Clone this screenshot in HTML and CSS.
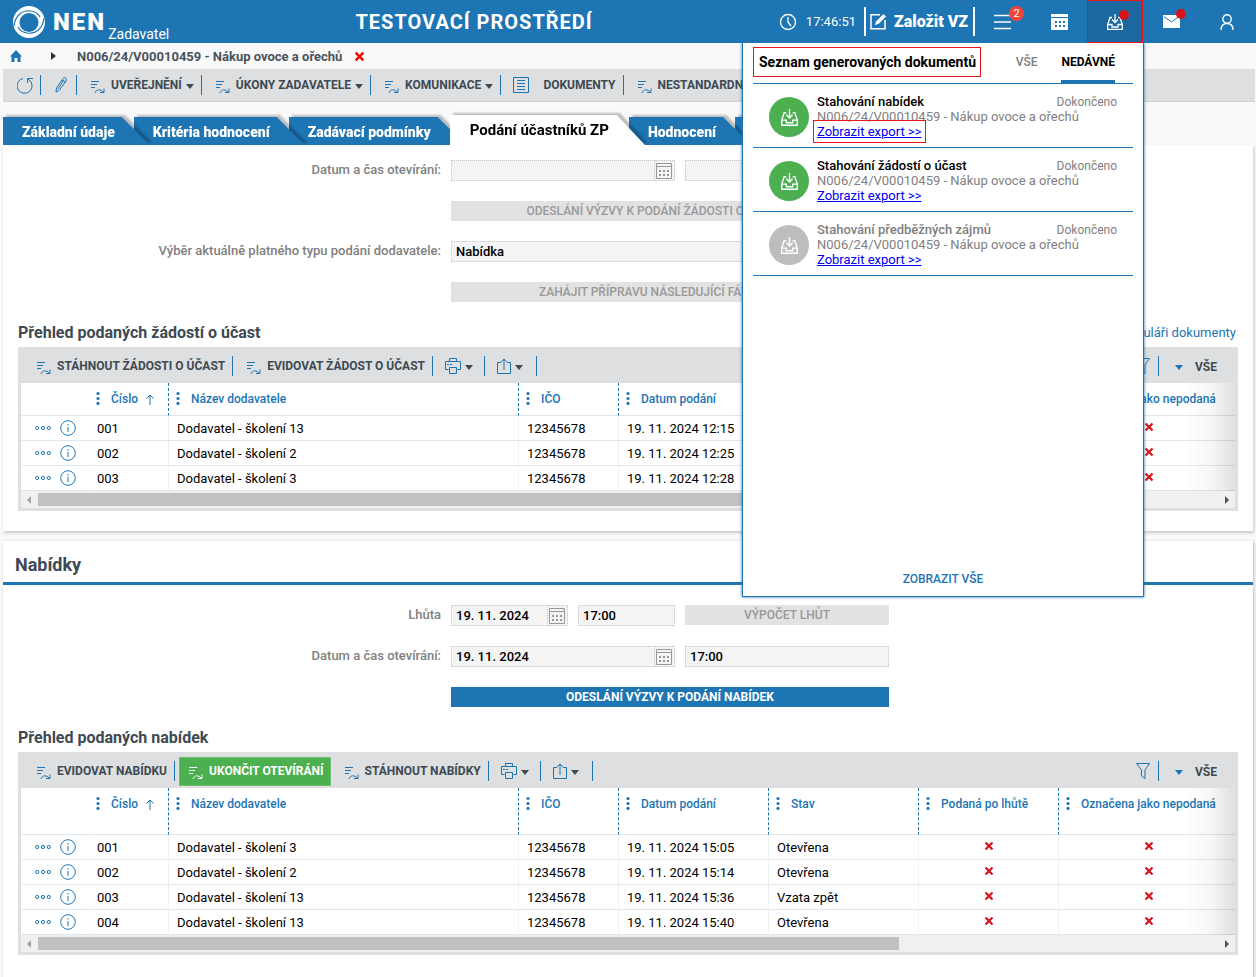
FILE: index.html
```html
<!DOCTYPE html>
<html lang="cs">
<head>
  <meta charset="UTF-8">
  <title>NEN Zadavatel</title>
  <link rel="stylesheet" href="styles.css">
</head>
<body>
  <!-- icon set -->
  <svg class="sprite" aria-hidden="true">
    <symbol id="i-logo" viewBox="0 0 32 32"><path fill="#fff" fill-rule="evenodd" d="M16 0a16 16 0 1 1 0 32a16 16 0 1 1 0-32zM16 7a9.500 9.500 0 1 0 0 19a9.500 9.500 0 1 0 0-19z"/><path fill="none" stroke="#1d75b4" stroke-width="1.200" d="M1 20C2 10 9 3.500 18 5c4 .5 7 2.500 9 6M31 12c-1 10-8 16.500-17 15-4-.5-7-2.500-9-6"/></symbol>
    <symbol id="i-action" viewBox="0 0 14 14"><path fill="none" stroke="currentColor" d="M0 1.500h8M0 4.500h6M0 7.500h4M4 13c1-4 6-4 8-1M13 8.500v4H9"/></symbol>
    <symbol id="i-caret" viewBox="0 0 8 5"><path fill="currentColor" d="M0 0h8L4 5z"/></symbol>
    <symbol id="i-print" viewBox="0 0 16 16"><path fill="none" stroke="currentColor" d="M4.500 3.500v-3h7v3M3.500 11.500h-3v-8h15v8h-3M4.500 9.500h7v6h-7zM2 6.500h2M5 6.500h2"/></symbol>
    <symbol id="i-share" viewBox="0 0 14 16"><path fill="none" stroke="currentColor" d="M4 4.500H.500v11h13v-11H10M7 12V1M4 4l3-3 3 3"/></symbol>
    <symbol id="i-filter" viewBox="0 0 14 16"><path fill="none" stroke="currentColor" d="M.500.500h13L9 7v8.500L5.500 13V7z"/></symbol>
    <symbol id="i-calendar" viewBox="0 0 16 16"><path fill="none" stroke="currentColor" d="M.500.500h15v15H.500zM0 3.500h16"/><path fill="currentColor" d="M3 7h2v2H3zM7 7h2v2H7zM11 7h2v2h-2zM3 11h2v2H3zM7 11h2v2H7zM11 11h2v2h-2z"/></symbol>
    <symbol id="i-tray" viewBox="0 0 16 16"><path fill="none" stroke="currentColor" stroke-width="1.300" d="M5 3.500H3l-2.300 7v4.800h14.600v-4.800L13 3.500h-2M.700 10.500H5V13h6v-2.500h4.300M8 0v8.500M5 5.500l3 3 3-3"/></symbol>
    <symbol id="i-x" viewBox="0 0 10 10"><path fill="none" stroke="currentColor" stroke-width="2.200" d="M1.500 1.500l7 7M8.500 1.500l-7 7"/></symbol>
    <symbol id="i-info" viewBox="0 0 16 16"><circle cx="8" cy="8" r="7.300" fill="none" stroke="currentColor"/><path stroke="currentColor" d="M8 7v5M8 4v1.500"/></symbol>
    <symbol id="i-more" viewBox="0 0 16 6"><g fill="none" stroke="currentColor"><circle cx="2.200" cy="3" r="1.600"/><circle cx="8" cy="3" r="1.600"/><circle cx="13.800" cy="3" r="1.600"/></g></symbol>
    <symbol id="i-up" viewBox="0 0 8 11"><path fill="none" stroke="currentColor" d="M4 11V1M.500 4.500L4 1l3.500 3.500"/></symbol>
    <symbol id="i-dots" viewBox="0 0 4 14"><g fill="currentColor"><circle cx="2" cy="2.500" r="1.600"/><circle cx="2" cy="7.500" r="1.600"/><circle cx="2" cy="12.400" r="1.600"/></g></symbol>
    <symbol id="i-refresh" viewBox="0 0 16 17"><path fill="none" stroke="currentColor" d="M6 1.500A7.500 7.500 0 1 0 14.500 6M10.500 6V1.500H16M10.500 1.500L15 6"/></symbol>
    <symbol id="i-pencil" viewBox="0 0 12 16"><path fill="none" stroke="currentColor" d="M1 15l.5-4L8 1.500C9.500-.500 12.500 1.500 11 4L4.500 13zM7 3l3.500 2.500M8.500 3.500L3 12"/></symbol>
    <symbol id="i-doc" viewBox="0 0 16 16"><path fill="none" stroke="currentColor" d="M.500.500h15v15H.500zM4 3.500h8M4 6.500h8M4 9.500h8M4 12.500h8"/></symbol>
  </svg>

  <header class="header">
    <a class="logo" href="#">
      <svg class="logo-mark"><use href="#i-logo"/></svg>
      <span class="logo-name">NEN</span>
      <span class="logo-role">Zadavatel</span>
    </a>
    <h1 class="env">TESTOVACÍ PROSTŘEDÍ</h1>
    <div class="clock">
      <svg width="18" height="18" viewBox="0 0 18 18"><circle cx="9" cy="9" r="7.500" fill="none" stroke="#fff" stroke-width="1.300"/><path fill="none" stroke="#fff" stroke-width="1.300" d="M9 4v5l3 4"/></svg>
      <span>17:46:51</span>
    </div>
    <button class="create">
      <svg width="17" height="17" viewBox="0 0 17 17"><path fill="none" stroke="#fff" stroke-width="1.500" d="M10 1.700H1v14h14V7"/><path fill="#fff" d="M5 12l1-3.500L13.500 1 16 3.500 8.500 11z"/></svg>
      Založit VZ
    </button>
    <nav class="header-nav">
      <button class="nav-btn" aria-label="Úkoly">
        <svg width="18" height="16" viewBox="0 0 18 16"><path stroke="#fff" stroke-width="1.500" d="M0 1.500h17M0 8h17M0 14.500h17"/></svg>
        <span class="badge">2</span>
      </button>
      <button class="nav-btn" aria-label="Kalendář">
        <svg width="17" height="16" viewBox="0 0 17 16"><path fill="#fff" fill-rule="evenodd" d="M0 0h17v3H0zM0 4h17v12H0zM4 7v2h2V7zM8 7v2h2V7zM12 7v2h2V7zM4 11v2h2v-2zM8 11v2h2v-2zM12 11v2h2v-2z"/></svg>
      </button>
      <button class="nav-btn active" aria-label="Generované dokumenty">
        <svg width="16" height="16"><use href="#i-tray"/></svg>
        <span class="dot"></span>
      </button>
      <button class="nav-btn" aria-label="Zprávy">
        <svg width="17" height="13" viewBox="0 0 17 13"><path fill="#fff" d="M0 0h17v13H0z"/><path fill="none" stroke="#1d75b4" d="M1 1.500l7.500 5.500L16 1.500"/></svg>
        <span class="dot"></span>
      </button>
      <button class="nav-btn" aria-label="Uživatel">
        <svg width="14" height="16" viewBox="0 0 14 16"><g fill="none" stroke="#fff" stroke-width="1.400"><circle cx="7" cy="5" r="4.200"/><path d="M1 16c0-4 2-6.500 6-6.500s6 2.500 6 6.500"/></g></svg>
      </button>
    </nav>

    <div class="popup">
      <div class="popup-head">
        <h2 class="marked">Seznam generovaných dokumentů</h2>
        <button class="popup-tab">VŠE</button>
        <button class="popup-tab active">NEDÁVNÉ</button>
      </div>
      <ul class="exports">
        <li class="export">
          <span class="export-icon"><svg width="17" height="17"><use href="#i-tray"/></svg></span>
          <div class="export-text">
            <strong>Stahování nabídek</strong>
            <span>N006/24/V00010459 - Nákup ovoce a ořechů</span>
            <a class="outlined" href="#">Zobrazit export &gt;&gt;</a>
          </div>
          <span class="export-state">Dokončeno</span>
        </li>
        <li class="export">
          <span class="export-icon"><svg width="17" height="17"><use href="#i-tray"/></svg></span>
          <div class="export-text">
            <strong>Stahování žádostí o účast</strong>
            <span>N006/24/V00010459 - Nákup ovoce a ořechů</span>
            <a href="#">Zobrazit export &gt;&gt;</a>
          </div>
          <span class="export-state">Dokončeno</span>
        </li>
        <li class="export old">
          <span class="export-icon"><svg width="17" height="17"><use href="#i-tray"/></svg></span>
          <div class="export-text">
            <strong>Stahování předběžných zájmů</strong>
            <span>N006/24/V00010459 - Nákup ovoce a ořechů</span>
            <a href="#">Zobrazit export &gt;&gt;</a>
          </div>
          <span class="export-state">Dokončeno</span>
        </li>
      </ul>
      <a class="show-all" href="#">ZOBRAZIT VŠE</a>
    </div>
  </header>

  <nav class="breadcrumb">
    <a href="#" aria-label="Domů"><svg width="12" height="12" viewBox="0 0 12 12"><path fill="#1d75b4" d="M6 0l6 6.500h-1.500V12H7.500V8h-3v4h-3V6.500H0z"/></svg></a>
    <svg width="5" height="8" viewBox="0 0 5 8"><path fill="#333" d="M0 0l5 4-5 4z"/></svg>
    <span class="crumb">N006/24/V00010459 - Nákup ovoce a ořechů</span>
    <button class="close" aria-label="Zavřít"><svg width="11" height="11"><use href="#i-x"/></svg></button>
  </nav>

  <div class="toolbar main-toolbar">
    <button class="tool" aria-label="Obnovit"><svg width="16" height="17"><use href="#i-refresh"/></svg></button>
    <button class="tool" aria-label="Upravit"><svg width="12" height="16"><use href="#i-pencil"/></svg></button>
    <button class="tool"><svg class="act"><use href="#i-action"/></svg>UVEŘEJNĚNÍ<svg class="caret"><use href="#i-caret"/></svg></button>
    <button class="tool"><svg class="act"><use href="#i-action"/></svg>ÚKONY ZADAVATELE<svg class="caret"><use href="#i-caret"/></svg></button>
    <button class="tool"><svg class="act"><use href="#i-action"/></svg>KOMUNIKACE<svg class="caret"><use href="#i-caret"/></svg></button>
    <button class="tool wide"><svg width="16" height="16"><use href="#i-doc"/></svg>DOKUMENTY</button>
    <button class="tool"><svg class="act"><use href="#i-action"/></svg>NESTANDARDNÍ UKONČENÍ<svg class="caret"><use href="#i-caret"/></svg></button>
  </div>

  <ul class="tabs">
    <li><a href="#">Základní údaje</a></li>
    <li><a href="#">Kritéria hodnocení</a></li>
    <li><a href="#">Zadávací podmínky</a></li>
    <li class="active"><a href="#">Podání účastníků ZP</a></li>
    <li><a href="#">Hodnocení</a></li>
    <li><a href="#">Výsledek</a></li>
  </ul>

  <section class="card first">
    <div class="form">
      <label for="open1">Datum a čas otevírání:</label>
      <div class="fields">
        <div class="date span2"><input id="open1" type="text"><button aria-label="Vybrat datum"><svg width="16" height="16"><use href="#i-calendar"/></svg></button></div>
        <input type="text" aria-label="Čas otevírání">
      </div>
      <button class="btn" disabled>ODESLÁNÍ VÝZVY K PODÁNÍ ŽÁDOSTI O ÚČAST V ZP</button>
      <label for="kind">Výběr aktuálně platného typu podání dodavatele:</label>
      <div class="fields"><input class="span3" id="kind" type="text" value="Nabídka"></div>
      <button class="btn" disabled>ZAHÁJIT PŘÍPRAVU NÁSLEDUJÍCÍ FÁZE ZADÁNÍ</button>
    </div>
    <div class="title-row">
      <h3>Přehled podaných žádostí o účast</h3>
      <a href="#">Formuláři dokumenty</a>
    </div>
    <div class="grid-box">
      <div class="toolbar">
        <button class="tool"><svg class="act"><use href="#i-action"/></svg>STÁHNOUT ŽÁDOSTI O ÚČAST</button>
        <button class="tool"><svg class="act"><use href="#i-action"/></svg>EVIDOVAT ŽÁDOST O ÚČAST</button>
        <button class="tool icon" aria-label="Tisk"><svg width="16" height="16"><use href="#i-print"/></svg><svg class="caret"><use href="#i-caret"/></svg></button>
        <button class="tool icon" aria-label="Export"><svg width="14" height="16"><use href="#i-share"/></svg><svg class="caret"><use href="#i-caret"/></svg></button>
        <button class="tool filter" aria-label="Filtr"><svg width="14" height="16"><use href="#i-filter"/></svg></button>
        <button class="tool all"><svg class="caret"><use href="#i-caret"/></svg>VŠE</button>
      </div>
      <div class="table-wrap">
        <table id="requests"></table>
      </div>
      <div class="scroll"><span class="arrow left"></span><div class="track"><div class="thumb"></div></div><span class="arrow right"></span></div>
    </div>
  </section>

  <section class="card second">
    <h2 class="section-title">Nabídky</h2>
    <div class="form">
      <label for="term">Lhůta</label>
      <div class="fields">
        <div class="date"><input id="term" type="text" value="19. 11. 2024"><button aria-label="Vybrat datum"><svg width="16" height="16"><use href="#i-calendar"/></svg></button></div>
        <input type="text" value="17:00" aria-label="Čas lhůty">
        <button class="btn" disabled>VÝPOČET LHŮT</button>
      </div>
      <label for="open2">Datum a čas otevírání:</label>
      <div class="fields">
        <div class="date span2"><input id="open2" type="text" value="19. 11. 2024"><button aria-label="Vybrat datum"><svg width="16" height="16"><use href="#i-calendar"/></svg></button></div>
        <input type="text" value="17:00" aria-label="Čas otevírání">
      </div>
      <button class="btn primary">ODESLÁNÍ VÝZVY K PODÁNÍ NABÍDEK</button>
    </div>
    <div class="title-row">
      <h3>Přehled podaných nabídek</h3>
    </div>
    <div class="grid-box">
      <div class="toolbar">
        <button class="tool"><svg class="act"><use href="#i-action"/></svg>EVIDOVAT NABÍDKU</button>
        <button class="tool green"><svg class="act"><use href="#i-action"/></svg>UKONČIT OTEVÍRÁNÍ</button>
        <button class="tool"><svg class="act"><use href="#i-action"/></svg>STÁHNOUT NABÍDKY</button>
        <button class="tool icon" aria-label="Tisk"><svg width="16" height="16"><use href="#i-print"/></svg><svg class="caret"><use href="#i-caret"/></svg></button>
        <button class="tool icon" aria-label="Export"><svg width="14" height="16"><use href="#i-share"/></svg><svg class="caret"><use href="#i-caret"/></svg></button>
        <button class="tool filter" aria-label="Filtr"><svg width="14" height="16"><use href="#i-filter"/></svg></button>
        <button class="tool all"><svg class="caret"><use href="#i-caret"/></svg>VŠE</button>
      </div>
      <div class="table-wrap">
        <table id="offers" class="tall"></table>
      </div>
      <div class="scroll"><span class="arrow left"></span><div class="track"><div class="thumb"></div></div><span class="arrow right"></span></div>
    </div>
  </section>

  <script>
    var requests = [
      ["001", "Dodavatel - školení 13", "12345678", "19. 11. 2024 12:15", "Otevřena"],
      ["002", "Dodavatel - školení 2", "12345678", "19. 11. 2024 12:25", "Otevřena"],
      ["003", "Dodavatel - školení 3", "12345678", "19. 11. 2024 12:28", "Otevřena"]
    ];
    var offers = [
      ["001", "Dodavatel - školení 3", "12345678", "19. 11. 2024 15:05", "Otevřena"],
      ["002", "Dodavatel - školení 2", "12345678", "19. 11. 2024 15:14", "Otevřena"],
      ["003", "Dodavatel - školení 13", "12345678", "19. 11. 2024 15:36", "Vzata zpět"],
      ["004", "Dodavatel - školení 13", "12345678", "19. 11. 2024 15:40", "Otevřena"]
    ];
    var columns = ["Číslo", "Název dodavatele", "IČO", "Datum podání", "Stav", "Podaná po lhůtě", "Označena jako nepodaná"];
    var classes = ["c-num", "c-name", "c-ico", "c-date", "c-state", "c-late", "c-void"];

    function icon(name, cls) {
      return `<svg class="${cls}"><use href="#${name}"/></svg>`;
    }

    function showTable(id, rows) {
      var head = columns.map((c, i) => `
        <th class="${classes[i]}">${icon("i-dots", "dots")}${c}${i == 0 ? icon("i-up", "up") : ""}</th>`).join("");

      var body = rows.map(r => `
        <tr>
          <td class="c-act">
            <button aria-label="Další akce">${icon("i-more", "more")}</button>
            <button aria-label="Detail">${icon("i-info", "info")}</button>
          </td>
          ${r.map(v => `<td>${v}</td>`).join("")}
          <td class="mark">${icon("i-x", "no")}</td>
          <td class="mark">${icon("i-x", "no")}</td>
        </tr>`).join("");

      document.getElementById(id).innerHTML =
        `<thead><tr><th class="c-act"></th>${head}</tr></thead><tbody>${body}</tbody>`;
    }

    showTable("requests", requests);
    showTable("offers", offers);
  </script>
</body>
</html>
```
FILE: styles.css
```css
* {
  box-sizing: border-box;
}
body {
  margin: 0;
  min-height: 100vh;
  display: flex;
  flex-direction: column;
  font-family: Roboto, "Liberation Sans", sans-serif;
  font-size: 13px;
  color: #000;
  background: #f9f9f9;
  overflow-x: hidden;
}
h1, h2, h3, ul {
  margin: 0;
  padding: 0;
}
ul {
  list-style: none;
}
button {
  font: inherit;
  color: inherit;
  background: none;
  border: none;
  padding: 0;
}
svg {
  display: block;
  flex: none;
}
a {
  text-decoration: none;
}
.sprite {
  position: absolute;
  width: 0;
  height: 0;
}

/* header */
.header {
  position: relative;
  z-index: 8;
  display: flex;
  height: 43px;
  align-items: center;
  padding-right: 1px;
  background: #1d75b4;
  color: white;
}
.logo {
  display: flex;
  align-items: center;
  height: 43px;
  padding-left: 13px;
  color: white;
}
.logo-mark {
  width: 32px;
  height: 32px;
}
.logo-name {
  margin: 0 2px 0 8px;
  font-size: 24px;
  font-weight: 900;
  letter-spacing: 2px;
}
.logo-role {
  align-self: flex-end;
  font-size: 14px;
  line-height: 18px;
}
.env {
  flex: 1;
  text-align: center;
  font-size: 20px;
  font-weight: 700;
  letter-spacing: 1px;
}
.clock {
  display: flex;
  align-items: center;
  gap: 9px;
}
.create {
  display: flex;
  align-items: center;
  gap: 7px;
  height: 29px;
  margin-left: 8px;
  padding: 0 5px 0 4px;
  border: solid white;
  border-width: 0 2px;
  font-size: 16px;
  font-weight: 900;
}
.header-nav {
  display: flex;
}
.nav-btn {
  position: relative;
  display: flex;
  align-items: center;
  justify-content: center;
  width: 56px;
  height: 43px;
}
.nav-btn.active {
  background: #1a689f;
  border: 1px solid #e8141e;
}
.badge {
  position: absolute;
  top: 6px;
  right: 7px;
  width: 15px;
  height: 15px;
  border-radius: 50%;
  background: #f44336;
  font-size: 11px;
  line-height: 15px;
}
.dot {
  position: absolute;
  top: 9px;
  right: 13px;
  width: 10px;
  height: 10px;
  border-radius: 50%;
  background: #d8131b;
}

/* generated documents popup */
.popup {
  position: absolute;
  z-index: 20;
  top: 43px;
  right: 112px;
  width: 402px;
  height: 554px;
  display: flex;
  flex-direction: column;
  padding: 0 10px 10px;
  background: white;
  border: 1px solid #1d75b4;
  border-top: none;
  box-shadow: 0 0 3px #1d75b4;
  clip-path: inset(0 -4px -4px -4px);
  color: #000;
}
.popup-head {
  display: flex;
  height: 41px;
  align-items: flex-start;
  padding-right: 18px;
  border-bottom: 1px solid #1d75b4;
}
.marked {
  margin: 4px auto 0 0;
  padding: 1px 4px 0 5px;
  border: 1px solid #e8141e;
  font-size: 14px;
  font-weight: 700;
  line-height: 27px;
}
.popup-tab {
  height: 40px;
  margin-left: 24px;
  padding-top: 1px;
  border-bottom: 3px solid transparent;
  font-size: 12px;
  font-weight: 500;
  color: #808080;
}
.popup-tab.active {
  border-color: #1d75b4;
  font-weight: 700;
  color: #000;
}
.export {
  display: flex;
  height: 64px;
  align-items: flex-start;
  padding: 10px 16px 0;
  border-bottom: 1px solid #1d75b4;
  line-height: 15px;
  white-space: nowrap;
  color: #808080;
}
.export-icon {
  display: flex;
  flex: none;
  align-items: center;
  justify-content: center;
  width: 40px;
  height: 40px;
  margin: 3px 8px 0 0;
  border-radius: 50%;
  background: #4caf50;
  color: white;
}
.old .export-icon {
  background: #bdbdbd;
}
.export-text {
  display: flex;
  flex: 1;
  min-width: 0;
  flex-direction: column;
  align-items: flex-start;
}
.export-text strong {
  font-weight: 500;
  color: #000;
}
.export.old strong {
  color: #808080;
}
.export-text a {
  color: #0000ee;
  text-decoration: underline;
}
.outlined {
  outline: 1px solid #e8141e;
  outline-offset: 3px;
}
.export-state {
  font-size: 12px;
  line-height: 17px;
}
.show-all {
  margin-top: auto;
  text-align: center;
  font-size: 12px;
  font-weight: 500;
  color: #1d75b4;
}

/* breadcrumb and toolbars */
.breadcrumb {
  display: flex;
  align-items: center;
  height: 26px;
  padding-left: 10px;
}
.breadcrumb > svg {
  margin: 0 21px 0 29px;
}
.crumb {
  font-weight: 700;
  color: #49535c;
}
.close {
  margin-left: 12px;
  color: red;
}
.toolbar {
  display: flex;
  align-items: center;
  background: #dddfe1;
}
.main-toolbar {
  height: 33px;
  margin: 0 1px 0 3px;
  border-bottom: 1px solid #d2d2d2;
}
.tool {
  display: flex;
  align-items: center;
  height: 20px;
  padding: 0 7px 0 14px;
  border-right: 1px solid #1d75b4;
  font-size: 12px;
  font-weight: 700;
  line-height: 16px;
  color: #3e4a52;
  white-space: nowrap;
}
.tool svg {
  color: #1d75b4;
}
.tool .act {
  width: 14px;
  height: 14px;
  margin: 4px 6px 0 0;
}
.tool .caret {
  width: 8px;
  height: 5px;
  margin: 2px 0 0 4px;
  color: #3e4a52;
}
.main-toolbar .tool:nth-child(2) {
  padding-right: 9px;
}
.tool.wide {
  gap: 14px;
  padding-left: 12px;
}
.tool:last-child {
  border-right: none;
}

/* tabs */
.tabs {
  display: flex;
  align-items: flex-end;
  height: 43px;
  padding-left: 3px;
}
.tabs li {
  position: relative;
  margin-right: -16px;
  filter: drop-shadow(3px -2px 1px rgba(0, 0, 0, 0.25));
}
.tabs li:nth-child(1) { z-index: 5; }
.tabs li:nth-child(2) { z-index: 4; }
.tabs li:nth-child(3) { z-index: 3; }
.tabs li.active { z-index: 6; }
.tabs li:nth-child(5) { z-index: 2; }
.tabs a {
  display: block;
  height: 28px;
  padding: 0 35px 0 19px;
  background: #1d75b4;
  clip-path: polygon(0 0, calc(100% - 28px) 0, 100% 100%, 0 100%);
  color: white;
  font-size: 14px;
  font-weight: 900;
  line-height: 31px;
}
.tabs .active a {
  height: 30px;
  padding: 0 36px 0 20px;
  background: white;
  color: #000;
  font-size: 15px;
  font-weight: 700;
  line-height: 30px;
}

/* cards and forms */
.card {
  margin: 0 3px;
  padding: 0 15px 20px;
  background: white;
  box-shadow: 1px 1px 3px rgba(0, 0, 0, 0.25);
}
.first {
  position: relative;
  z-index: 7;
  padding-top: 15px;
  box-shadow: 1px 2px 3px rgba(0, 0, 0, 0.2);
}
.second {
  flex: 1;
  margin-top: 10px;
}
.section-title {
  margin: 0 -15px 20px;
  padding: 7px 12px 0;
  border-bottom: 3px solid #1d75b4;
  font-size: 18px;
  font-weight: 700;
  line-height: 34px;
  color: #3e4a52;
}
.form {
  display: grid;
  grid-template-columns: 438fr 438fr 354fr;
  gap: 20px 10px;
  margin: 0 -15px;
}
.form label {
  grid-column: 1;
  text-align: right;
  font-weight: 500;
  line-height: 19px;
  color: #808080;
}
.form > .btn {
  grid-column: 2;
}
.fields {
  display: grid;
  grid-template-columns: 117fr 97fr 204fr;
  gap: 10px;
  height: 21px;
}
.span2 {
  grid-column: span 2;
}
.span3 {
  grid-column: span 3;
}
input {
  width: 100%;
  min-width: 0;
  height: 21px;
  padding: 0 4px;
  border: 1px dotted #c4c4c4;
  background: #f4f4f4;
  font: 500 13px Roboto, "Liberation Sans", sans-serif;
}
.date {
  display: flex;
  height: 21px;
}
.date button {
  padding: 0 2px 0 1px;
  border: 1px dotted #c4c4c4;
  border-left: none;
  background: #f4f4f4;
  color: #999;
}
.btn {
  height: 20px;
  background: #e2e2e2;
  color: #999;
  font-size: 12px;
  font-weight: 500;
}
.btn.primary {
  background: #1d75b4;
  color: white;
  font-weight: 700;
}
.title-row {
  display: flex;
  justify-content: space-between;
  align-items: center;
  height: 45px;
  padding: 16px 2px 0 0;
}
.title-row a {
  color: #1d75b4;
}
.title-row h3 {
  margin-left: 0;
  font-size: 16px;
  font-weight: 700;
  color: #3e4a52;
}

/* grids */
.grid-box {
  border: 3px solid #dddfe1;
  border-top: none;
}
.grid-box .toolbar {
  height: 36px;
  padding: 2px 4px 0 2px;
}
.grid-box .tool.green {
  height: 29px;
  margin-left: 4px;
  padding: 0 6px 0 9px;
  border: 1px solid #6fbf73;
  background: #4caf50;
  color: white;
}
.tool.green svg {
  color: white;
}
.grid-box .icon {
  width: 52px;
  padding: 0 0 0 12px;
}
.grid-box .filter {
  margin-left: auto;
  padding-right: 8px;
}
.grid-box .all {
  gap: 12px;
  padding: 2px 14px 0 12px;
}
.grid-box .all .caret {
  margin-top: 0;
  color: #1d75b4;
}
.table-wrap {
  position: relative;
  overflow: hidden;
}
.table-wrap::after {
  content: "";
  position: absolute;
  top: 0;
  right: 0;
  bottom: 0;
  width: 50px;
  background: linear-gradient(to right, transparent, rgba(0, 0, 0, 0.03) 50%, rgba(0, 0, 0, 0.12));
}
table {
  width: 1217px;
  min-width: 100%;
  table-layout: fixed;
  border-collapse: separate;
  border-spacing: 0;
}
th {
  height: 33px;
  padding: 8px 8px 0 7px;
  border-bottom: 1px solid #dde6ec;
  border-left: 1px dashed #1d75b4;
  font-size: 12px;
  font-weight: 500;
  line-height: 16px;
  text-align: left;
  vertical-align: top;
  white-space: nowrap;
  color: #1d75b4;
}
.tall th {
  height: 47px;
}
td {
  height: 25px;
  padding: 0 8px;
  border-bottom: 1px solid #dde6ec;
  border-left: 1px dotted #dde6ec;
  white-space: nowrap;
}
.c-act { width: 67px; }
.c-num { width: 80px; }
.c-name { width: 350px; }
.c-ico { width: 100px; }
.c-date { width: 150px; }
.c-state { width: 150px; }
.c-late { width: 140px; }
.c-void { width: 180px; }
th:nth-child(-n+2), td:nth-child(-n+2) {
  border-left-color: transparent;
}
td.c-act {
  padding: 0 0 0 13px;
}
.c-act button {
  display: inline-block;
  vertical-align: middle;
  margin-right: 6px;
  color: #1d75b4;
}
.more {
  width: 16px;
  height: 6px;
}
.info {
  width: 16px;
  height: 16px;
}
.dots {
  display: inline-block;
  width: 4px;
  height: 14px;
  margin-right: 11px;
  vertical-align: -2px;
}
.up {
  display: inline-block;
  width: 8px;
  height: 11px;
  margin-left: 8px;
  vertical-align: -2px;
}
td.mark {
  padding-bottom: 2px;
}
.no {
  width: 10px;
  height: 10px;
  margin: 0 auto;
  color: #d8131b;
}
.scroll {
  display: flex;
  height: 17px;
  align-items: center;
  justify-content: space-between;
  padding: 0 6px;
  background: #f0f0f0;
}
.track {
  flex: 1;
  margin: 0 7px;
}
.thumb {
  width: 73%;
  height: 13px;
  background: #c1c1c1;
}
.arrow {
  border: 4px solid transparent;
}
.arrow.left {
  border-left-width: 0;
  border-right-color: #a3a3a3;
}
.arrow.right {
  border-right-width: 0;
  border-left-color: #505050;
}
```
